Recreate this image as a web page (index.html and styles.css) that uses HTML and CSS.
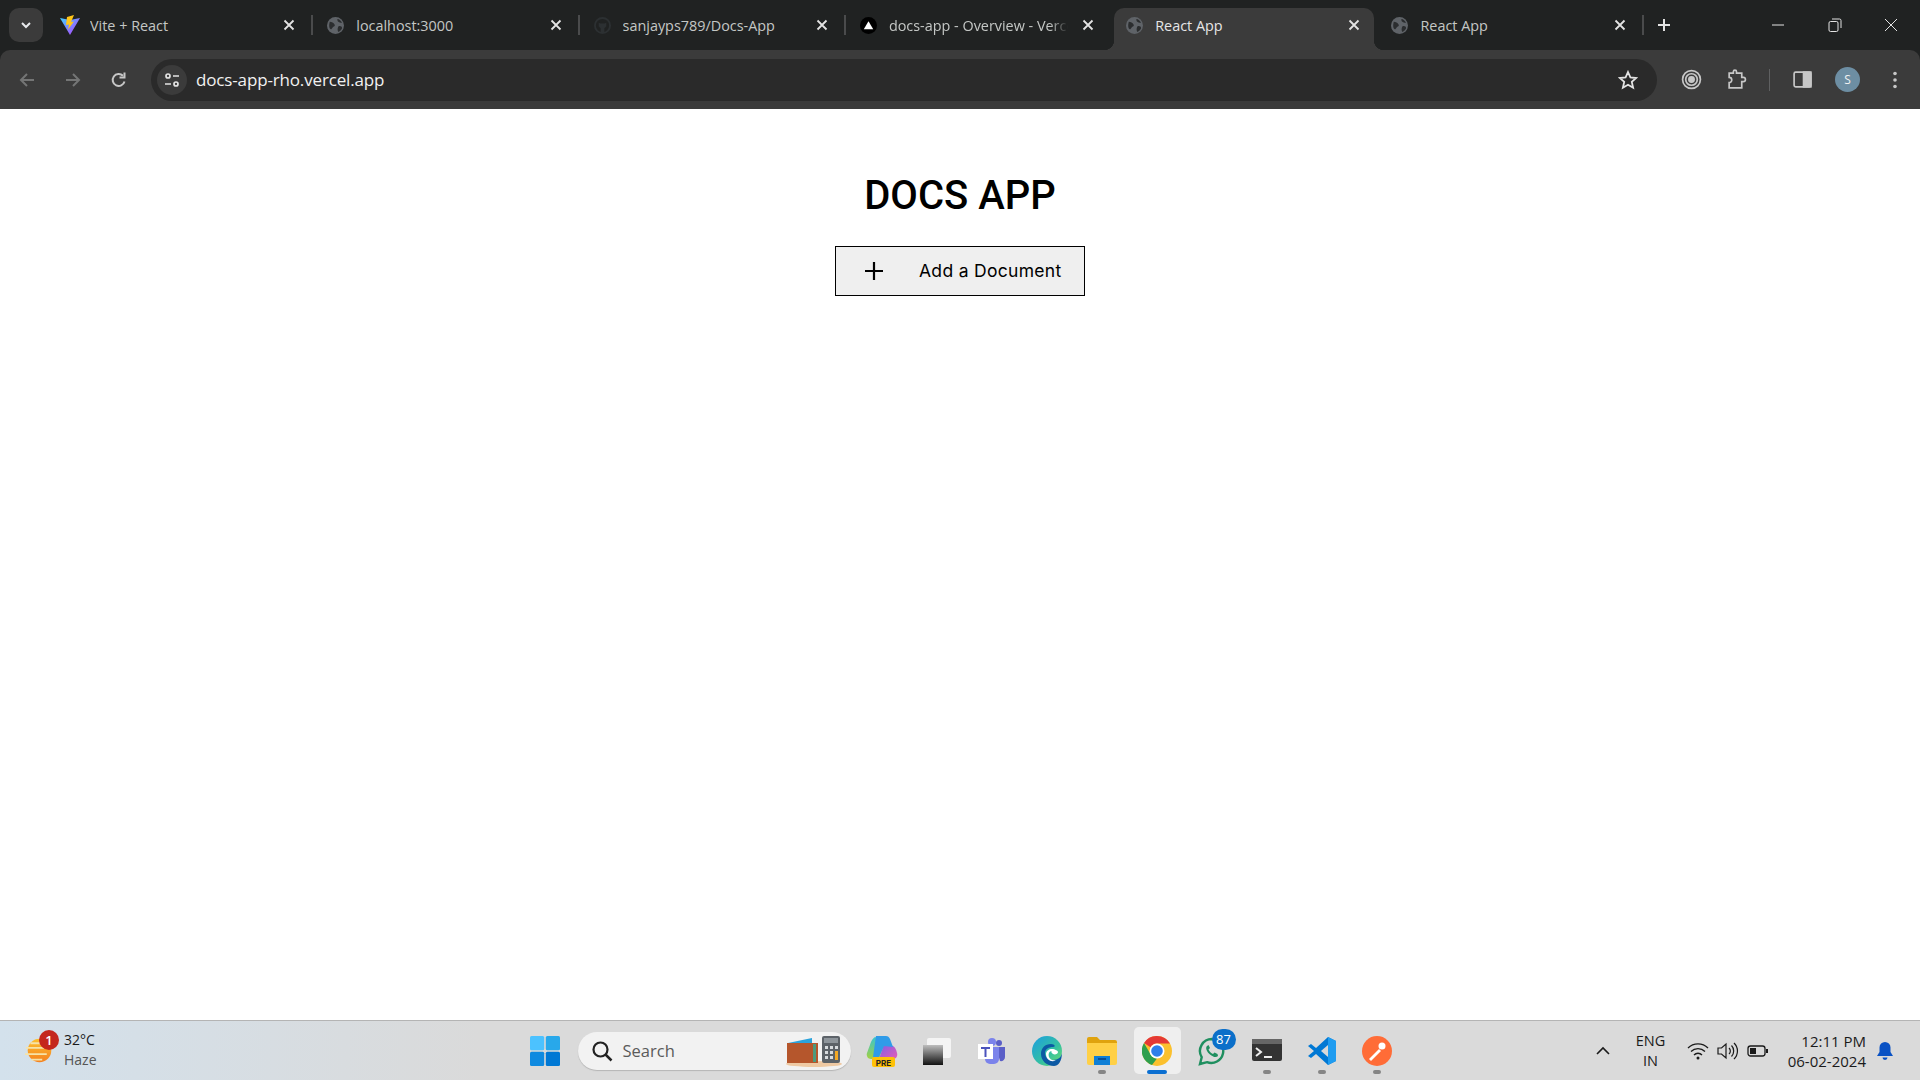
FILE: index.html
```html
<!DOCTYPE html>
<html lang="en">
<head>
    <meta charset="UTF-8">
    <meta name="viewport" content="width=device-width, initial-scale=1.0">
    <title>React App</title>
    <link rel="stylesheet" href="styles.css">
</head>
<body>
    <div class="chrome">
    <div class="tabstrip">
        <button class="tab-search"><svg width="14" height="14" viewBox="0 0 14 14"><path d="M3 5l4 4 4-4" fill="none" stroke="#e8eaed" stroke-width="2"/></svg></button>
        <div class="tab">
            <svg class="favicon favicon-vite" viewBox="0 0 20 20"><path d="M0 3l10 2 10-2-10 17z" fill="url(#vite)"/><path d="M14 0L7 2 6 10l3-.5-1 5 6-8-3 .5z" fill="#ffc517"/><defs><linearGradient id="vite" x1="0" y1="0" x2="1" y2="1"><stop offset="0" stop-color="#41d1ff"/><stop offset="1" stop-color="#bd34fe"/></linearGradient></defs></svg>
            <span class="tab-title">Vite + React</span>
            <svg class="tab-close" viewBox="0 0 16 16"><path d="M3.5 3.5l9 9m0-9l-9 9"/></svg>
        </div>
        <span class="tab-sep"></span>
        <div class="tab">
            <svg class="favicon" viewBox="0 0 18 18"><use href="#globe"/></svg>
            <span class="tab-title">localhost:3000</span>
            <svg class="tab-close" viewBox="0 0 16 16"><path d="M3.5 3.5l9 9m0-9l-9 9"/></svg>
        </div>
        <span class="tab-sep"></span>
        <div class="tab">
            <svg class="favicon" viewBox="0 0 18 18"><circle cx="9" cy="9" r="8" fill="none" stroke="#2c3032" stroke-width="2"/><path d="M5 6l2 1h4l2-1v4l-2 2v4H7v-4L5 10z" fill="#2c3032"/></svg>
            <span class="tab-title">sanjayps789/Docs-App</span>
            <svg class="tab-close" viewBox="0 0 16 16"><path d="M3.5 3.5l9 9m0-9l-9 9"/></svg>
        </div>
        <span class="tab-sep"></span>
        <div class="tab">
            <svg class="favicon" viewBox="0 0 18 18"><circle cx="9" cy="9" r="9" fill="#000"/><path d="M9 4.5l5 8.500H4z" fill="#fff"/></svg>
            <span class="tab-title tab-fade">docs-app - Overview - Vercel</span>
            <svg class="tab-close" viewBox="0 0 16 16"><path d="M3.5 3.5l9 9m0-9l-9 9"/></svg>
        </div>
        <span class="tab-sep tab-sep-off"></span>
        <div class="tab tab-active">
            <svg class="favicon" viewBox="0 0 18 18"><use href="#globe"/></svg>
            <span class="tab-title">React App</span>
            <svg class="tab-close" viewBox="0 0 16 16"><path d="M3.5 3.5l9 9m0-9l-9 9"/></svg>
        </div>
        <span class="tab-sep tab-sep-off tab-sep-tight"></span>
        <div class="tab">
            <svg class="favicon" viewBox="0 0 18 18"><use href="#globe"/></svg>
            <span class="tab-title">React App</span>
            <svg class="tab-close" viewBox="0 0 16 16"><path d="M3.5 3.5l9 9m0-9l-9 9"/></svg>
        </div>
        <span class="tab-sep"></span>
        <svg class="new-tab" viewBox="0 0 16 16"><path d="M8 2v12M2 8h12"/></svg>
        <div class="window-controls">
            <svg viewBox="0 0 14 14"><path d="M1 7h12"/></svg>
            <svg viewBox="0 0 14 14"><rect x="1" y="3.500" width="9" height="10" rx="1.500"/><path d="M4 1h7.500a1.500 1.500 0 0 1 1.500 1.500V10"/></svg>
            <svg viewBox="0 0 14 14"><path d="M1 1l12 12m0-12L1 13"/></svg>
        </div>
    </div>

    <div class="toolbar">
        <svg class="nav-icon nav-off" viewBox="0 0 18 18"><path d="M16 9H3m6-6L3 9l6 6"/></svg>
        <svg class="nav-icon nav-off" viewBox="0 0 18 18"><path d="M2 9h13M9 3l6 6-6 6"/></svg>
        <svg class="nav-icon" viewBox="0 0 18 18"><path d="M14.500 10.500A6 6 0 1 1 13 4.800"/><path d="M14.500 1.500v5h-5" /></svg>
        <div class="omnibox">
            <span class="site-info"><svg width="18" height="18" viewBox="0 0 18 18"><circle cx="5" cy="5" r="2"/><path d="M10 5h6M2 13h6"/><circle cx="13" cy="13" r="2"/></svg></span>
            <span class="url">docs-app-rho.vercel.app</span>
            <svg class="star" viewBox="0 0 20 20"><path d="M10 2l2.400 5.400 5.800.6-4.400 3.900 1.300 5.800-5.100-3-5.100 3 1.300-5.800L1.800 8l5.800-.6z"/></svg>
        </div>
        <div class="toolbar-actions">
            <svg class="tool-icon" viewBox="0 0 20 20"><circle cx="10" cy="10" r="8.500"/><circle cx="10" cy="10" r="5.500"/><circle cx="10" cy="10" r="2.500" fill="#c7c7c7"/></svg>
            <svg class="tool-icon" viewBox="0 0 20 20"><path d="M3 4h4V2.500a1.500 1.500 0 0 1 3 0V4h5v4h1.500a1.800 1.800 0 0 1 0 4H15v6H3v-5a2 2 0 0 0 0-5z"/></svg>
            <span class="tool-sep"></span>
            <svg class="tool-icon" viewBox="0 0 20 20"><rect x="2" y="3" width="16" height="14" rx="1.500"/><rect x="11" y="3" width="7" height="14" fill="#c7c7c7"/></svg>
            <span class="avatar">S</span>
            <svg class="tool-dots" viewBox="0 0 4 18"><circle cx="2" cy="2.500" r="1.800"/><circle cx="2" cy="9" r="1.800"/><circle cx="2" cy="15.500" r="1.800"/></svg>
        </div>
    </div>
    </div>

    <main class="page">
        <h1>DOCS APP</h1>
        <button class="add-doc">
            <svg width="20" height="20" viewBox="0 0 20 20"><path d="M10 1v18M1 10h18" stroke="#000" stroke-width="2.200"/></svg>
            <span class="add-doc-label">Add a Document</span>
        </button>
    </main>

    <footer class="taskbar">
        <div class="weather">
            <svg class="weather-icon" viewBox="0 0 32 32"><circle cx="16" cy="16" r="13" fill="url(#sun)"/><path d="M1 13h20M0 20h24M6 8h14M7 26h12" stroke="#f6e3a8" stroke-width="2"/><defs><linearGradient id="sun" x1="0" y1="0" x2="0" y2="1"><stop offset="0" stop-color="#fdc02f"/><stop offset="1" stop-color="#f4811f"/></linearGradient></defs></svg>
            <span class="weather-badge">1</span>
            <div class="weather-text">
                <span>32°C</span>
                <span class="haze">Haze</span>
            </div>
        </div>

        <div class="task-icons">
            <span class="task-item"><svg width="30" height="30" viewBox="0 0 30 30"><rect width="14.200" height="14.200" rx="1.500" fill="#4cc2ff"/><rect x="15.800" width="14.200" height="14.200" rx="1.500" fill="#28a8ea"/><rect y="15.800" width="14.200" height="14.200" rx="1.500" fill="#0f8ae0"/><rect x="15.800" y="15.800" width="14.200" height="14.200" rx="1.500" fill="#0078d4"/></svg></span>
            <div class="search-box">
                <svg width="22" height="22" viewBox="0 0 22 22"><circle cx="9.500" cy="9.500" r="7" fill="none" stroke="#222" stroke-width="2.200"/><path d="M14.500 14.500l6 6" stroke="#222" stroke-width="2.500"/></svg>
                <span class="search-label">Search</span>
                <svg class="search-art" width="58" height="32" viewBox="0 0 58 32"><ellipse cx="29" cy="29" rx="28" ry="3" fill="#eec9a3"/><rect x="2" y="8" width="31" height="20" fill="#b5562c"/><path d="M3 8l24-5v5z" fill="#2aa3dc"/><rect x="28" y="9" width="3" height="18" fill="#4d9a7d"/><rect x="37" y="1" width="18" height="27" rx="2" fill="#5c6268"/><rect x="39" y="3" width="14" height="5" fill="#8e959b"/><path d="M40 11h3v3h-3zm5 0h3v3h-3zm5 0h3v3h-3zM40 16h3v3h-3zm5 0h3v3h-3zM40 21h3v3h-3zm5 0h3v3h-3z" fill="#d7dbde"/><rect x="50" y="16" width="3" height="9" fill="#f3a824"/></svg>
            </div>
            <span class="task-item"><svg width="34" height="34" viewBox="0 0 34 34"><path d="M10 3c-2 1-3 3-4 5L2 19c-1 3 1 6 4 6h8L20 8z" fill="url(#copilot-left)"/><path d="M19 10l9 2c2 1 3 3 4 7 1 3-1 6-4 6H14z" fill="url(#copilot-right)"/><path d="M11 2h10c2 0 3 1 4 3l3 8-9-1-5 11H8z" fill="#2f9be8"/><defs><linearGradient id="copilot-left" x1="0" y1="0" x2="0" y2="1"><stop offset="0" stop-color="#37c6d0"/><stop offset="1" stop-color="#a5d13f"/></linearGradient><linearGradient id="copilot-right" x1="0" y1="0" x2="1" y2="1"><stop offset="0" stop-color="#7a5fe8"/><stop offset="1" stop-color="#e65bb8"/></linearGradient></defs><rect x="7" y="23" width="23" height="10" rx="2" fill="#ffc107"/><text x="18.500" y="31.500" text-anchor="middle" class="pre-tag">PRE</text></svg></span>
            <span class="task-item"><svg width="30" height="30" viewBox="0 0 30 30"><rect x="5" y="2" width="24" height="20" rx="2" fill="#f4f4f4"/><rect x="1" y="9" width="20" height="20" fill="url(#stack)"/><defs><linearGradient id="stack" x1="0" y1="0" x2="0" y2="1"><stop offset="0" stop-color="#bdbdbd"/><stop offset=".6" stop-color="#555"/><stop offset="1" stop-color="#111"/></linearGradient></defs></svg></span>
            <span class="task-item"><svg width="30" height="30" viewBox="0 0 30 30"><circle cx="22" cy="7" r="3" fill="#5b5fc7"/><circle cx="15" cy="6" r="4" fill="#7b83eb"/><path d="M19 11h9v10a4 4 0 0 1-5 4z" fill="#5b5fc7"/><path d="M8 11h14v12a5 5 0 0 1-5 5h-4a5 5 0 0 1-5-5z" fill="#7b83eb"/><rect x="1" y="8" width="15" height="15" fill="#fff"/><path d="M4 11h9v2h-3.500v8h-2v-8H4z" fill="#4b53bc"/></svg></span>
            <span class="task-item"><svg width="32" height="32" viewBox="0 0 32 32"><circle cx="16" cy="16" r="15" fill="url(#edge)"/><path d="M31 17c0 5-4 8-9 8-6 0-8-4-8-7 0-4 4-6 8-6 3 0 2-3-2-3-6 0-10 4-10 10 0 7 6 12 13 12 4 0 8-4 8-14z" fill="#0c59a4"/><path d="M15 19c0-3 3-5 6-5s6 2 6 3c0 2-3 3-5 2s-2-3-1-3c-3 0-4 3-3 6 1 2 3 4 7 3-4 3-10 0-10-6z" fill="#fff"/><defs><linearGradient id="edge" x1="0" y1="0" x2="1" y2="1"><stop offset="0" stop-color="#1b9de2"/><stop offset=".6" stop-color="#35c1a0"/><stop offset="1" stop-color="#74e06c"/></linearGradient></defs></svg></span>
            <span class="task-item task-running"><svg width="30" height="28" viewBox="0 0 30 28"><path d="M0 2a2 2 0 0 1 2-2h8l3 3h15a2 2 0 0 1 2 2v4H0z" fill="#e0a30e"/><path d="M0 6h30v20a2 2 0 0 1-2 2H2a2 2 0 0 1-2-2z" fill="#ffd046"/><path d="M7 19h16v9H7z" fill="#0f7fd6"/><rect x="11" y="21" width="8" height="2" fill="#0a4f96"/></svg></span>
            <span class="task-item task-active"><svg width="30" height="30" viewBox="0 0 30 30"><circle cx="15" cy="15" r="15" fill="#fbc02d"/><path d="M15 0a15 15 0 0 1 13 7.500H15a7.500 7.500 0 0 0-6.500 3.800L2 7a15 15 0 0 1 13-7z" fill="#e53935"/><path d="M2 7l6.500 11.300A7.500 7.500 0 0 0 15 22.500l-5 6.500A15 15 0 0 1 2 7z" fill="#2e9f4e"/><circle cx="15" cy="15" r="7.500" fill="#fff"/><circle cx="15" cy="15" r="5.800" fill="#2f7fea"/></svg></span>
            <span class="task-item"><svg width="30" height="30" viewBox="0 0 30 30"><path d="M15 3a12 12 0 0 0-10.300 18.200L3 28l7-1.800A12 12 0 1 0 15 3z" fill="none" stroke="#1f8f5f" stroke-width="2.400"/><path d="M10 10c-2 2 0 6 3 8.500s6 3.500 8 1.500l-.5-2-3-1.500-1.500 1.500c-2-1-3.500-2.500-4.500-4.500l1.500-1.500L11.500 9z" fill="#1f8f5f"/></svg><span class="task-badge">87</span></span>
            <span class="task-item task-running"><svg width="30" height="24" viewBox="0 0 30 24"><rect width="30" height="22" rx="2" fill="#333"/><rect width="30" height="5" fill="#666"/><path d="M4 9l5 4-5 4" fill="none" stroke="#eee" stroke-width="2"/><path d="M12 18h8" stroke="#eee" stroke-width="2"/></svg></span>
            <span class="task-item task-running"><svg width="30" height="30" viewBox="0 0 30 30"><path d="M21 1l8 4v20l-8 4L9 18l-5 4-3-2 6-5-6-5 3-2 5 4z" fill="#0078d4"/><path d="M21 1l8 4v20l-8 4z" fill="#1f9cf0"/><path d="M21 9l-7 6 7 6z" fill="#d9d9d9"/></svg></span>
            <span class="task-item task-running"><svg width="30" height="30" viewBox="0 0 30 30"><circle cx="15" cy="15" r="15" fill="#ff6c37"/><path d="M7 23l10-10 2 2-10 10z" fill="#fff"/><circle cx="20" cy="10" r="3.500" fill="#fff"/></svg></span>
        </div>

        <div class="tray">
            <svg class="tray-chevron" width="16" height="16" viewBox="0 0 16 16"><path d="M2 11l6-6 6 6"/></svg>
            <div class="tray-lang"><span>ENG</span><span>IN</span></div>
            <div class="tray-status">
                <svg width="22" height="20" viewBox="0 0 22 20"><path d="M1 7a14 14 0 0 1 20 0M4 10.500a10 10 0 0 1 14 0M7 14a5.500 5.500 0 0 1 8 0" fill="none" stroke="#1a1a1a" stroke-width="1.300"/><circle cx="11" cy="17" r="1.500" fill="#1a1a1a"/></svg>
                <svg width="22" height="20" viewBox="0 0 22 20"><path d="M1 7v6h3.500L9 17V3L4.500 7zM12 7a4 4 0 0 1 0 6M14.500 4.500a8 8 0 0 1 0 11M17 2a11 11 0 0 1 0 16" fill="none" stroke="#1a1a1a" stroke-width="1.200"/></svg>
                <svg width="22" height="20" viewBox="0 0 22 20"><rect x="1" y="5" width="17" height="10" rx="2.500" fill="none" stroke="#1a1a1a" stroke-width="1.300"/><rect x="3" y="7" width="6" height="6" fill="#1a1a1a"/><path d="M19 8h2v4h-2z" fill="#1a1a1a"/></svg>
            </div>
            <div class="tray-clock"><span>12:11 PM</span><span>06-02-2024</span></div>
            <svg class="tray-bell" width="18" height="20" viewBox="0 0 18 20"><path d="M9 1a5.500 5.500 0 0 1 5.500 5.500V11l2.500 4H1l2.500-4V6.500A5.500 5.500 0 0 1 9 1z" fill="#0a52c4"/><path d="M6.500 16.500h5a2.500 2.500 0 0 1-5 0z" fill="#0a52c4"/></svg>
        </div>
    </footer>

    <svg class="icon-defs" width="0" height="0"><defs><g id="globe"><circle cx="9" cy="9" r="9" fill="#5f6368"/><path d="M3 5c2 0 4 1 5 3s-1 2-2 3-1 2-2 2C2 12 2 8 3 5zM11 2c2 0 4 2 5 4-2 0-3 0-4-1s-1-2-1-3zM12 10c2-1 4 0 4 2-1 2-2 3-4 4-1-2-1-4 0-6z" fill="#2b2d2f"/></g></defs></svg>
</body>
</html>
```

FILE: styles.css
```css
/* Page frame */
html, body {
    height: 100%;
}
body {
    margin: 0;
    display: flex;
    flex-direction: column;
    height: 1080px;
    overflow: hidden;
    background: #fff;
    font-family: 'Open Sans', sans-serif;
}
.icon-defs {
    position: absolute;
}
.chrome {
    background: #202222;
}

/* Tab strip */
.tabstrip {
    display: flex;
    align-items: flex-end;
    height: 50px;
    padding-left: 9px;
    box-sizing: border-box;
}
.tab-search {
    align-self: flex-start;
    display: flex;
    align-items: center;
    justify-content: center;
    width: 34px;
    height: 34px;
    margin-top: 8px;
    margin-right: 6px;
    padding: 0;
    border: none;
    border-radius: 10px;
    background: #3b3b3b;
}
.tab {
    position: relative;
    display: flex;
    align-items: center;
    gap: 12px;
    width: 260.3px;
    height: 42px;
    padding: 0 12px 8px 12px;
    box-sizing: border-box;
    flex-shrink: 0;
    color: #c4c7c5;
}
.tab-active {
    background: #3b3b3b;
    border-radius: 10px 10px 0 0;
    color: #e6e6e6;
}
.tab-active::before,
.tab-active::after {
    content: "";
    position: absolute;
    bottom: 0;
    width: 10px;
    height: 10px;
}
.tab-active::before {
    left: -10px;
    background: radial-gradient(circle at 0 0, transparent 10px, #3b3b3b 10.500px);
}
.tab-active::after {
    right: -10px;
    background: radial-gradient(circle at 100% 0, transparent 10px, #3b3b3b 10.500px);
}
.favicon {
    width: 17px;
    height: 17px;
    flex-shrink: 0;
}
.favicon-vite {
    width: 20px;
    height: 20px;
    margin: 0 -1.500px;
}
.tab-title {
    flex: 1;
    overflow: hidden;
    white-space: nowrap;
    font-size: 14.400px;
}
.tab-fade {
    -webkit-mask-image: linear-gradient(to right, #000 90%, transparent 100%);
    mask-image: linear-gradient(to right, #000 90%, transparent 100%);
}
.tab-close {
    width: 16px;
    height: 16px;
    flex-shrink: 0;
    fill: none;
    stroke: #e3e3e3;
    stroke-width: 1.800;
}
.tab-sep {
    width: 2px;
    height: 20px;
    margin: 0 2px 15px;
    background: #4a4b4c;
    flex-shrink: 0;
}
.tab-sep-off {
    background: transparent;
}
.tab-sep-tight {
    margin: 0 3px 15px 0;
}
.new-tab {
    width: 16px;
    height: 16px;
    margin: 0 0 17px 10px;
    fill: none;
    stroke: #e3e3e3;
    stroke-width: 2;
}
.window-controls {
    display: flex;
    gap: 42.500px;
    margin-left: auto;
    margin-right: 22px;
    margin-bottom: 18px;
}
.window-controls svg {
    width: 14px;
    height: 14px;
    fill: none;
    stroke: #e3e3e3;
    stroke-width: 1;
}

/* Toolbar */
.toolbar {
    display: flex;
    align-items: center;
    height: 59px;
    padding: 0 23.500px 0 18px;
    background: #3b3b3b;
    box-sizing: border-box;
    border-radius: 10px 10px 0 0;
}
.nav-icon {
    width: 18px;
    height: 18px;
    margin-right: 28px;
    fill: none;
    stroke: #c7c7c7;
    stroke-width: 2;
    flex-shrink: 0;
}
.nav-off {
    stroke: #747575;
}
.omnibox {
    display: flex;
    align-items: center;
    width: 1506px;
    height: 42px;
    margin-left: -5px;
    padding: 0 19px 0 6px;
    box-sizing: border-box;
    border-radius: 21px;
    background: #2a2a2a;
    flex-shrink: 0;
}
.site-info {
    display: flex;
    align-items: center;
    justify-content: center;
    width: 30px;
    height: 30px;
    border-radius: 50%;
    background: #3b3b3b;
}
.site-info svg {
    fill: none;
    stroke: #e3e3e3;
    stroke-width: 1.700;
}
.url {
    flex: 1;
    margin-left: 9px;
    font-size: 17px;
    letter-spacing: -0.15px;
    color: #f1f1f1;
}
.star {
    width: 20px;
    height: 20px;
    fill: none;
    stroke: #e3e3e3;
    stroke-width: 1.800;
}
.toolbar-actions {
    display: flex;
    align-items: center;
    margin-left: 23.500px;
    flex: 1;
}
.tool-icon {
    width: 21px;
    height: 21px;
    margin-right: 24px;
    fill: none;
    stroke: #c7c7c7;
    stroke-width: 1.600;
    flex-shrink: 0;
}
.tool-sep {
    width: 1px;
    height: 22px;
    margin-left: -1.500px;
    margin-right: 22px;
    background: #5f6061;
}
.avatar {
    display: flex;
    align-items: center;
    justify-content: center;
    width: 25px;
    height: 25px;
    margin-left: -2px;
    border-radius: 50%;
    background: #6d8ea3;
    color: #f1f1f1;
    font-size: 12px;
}
.tool-dots {
    width: 4px;
    height: 18px;
    margin-left: auto;
    fill: #c7c7c7;
}

/* Page content */
.page {
    flex: 1;
    display: flex;
    flex-direction: column;
    align-items: center;
    padding-top: 62px;
}
h1 {
    margin: 0 0 25px;
    font-family: 'Roboto', sans-serif;
    font-size: 40px;
    line-height: 50px;
    font-weight: 500;
    color: #000;
}
.add-doc {
    display: flex;
    align-items: center;
    gap: 35px;
    width: 250px;
    height: 50px;
    padding: 0 0 0 28px;
    box-sizing: border-box;
    border: 1.500px solid #000;
    background: #efefef;
    font-family: 'Inter', sans-serif;
    font-size: 17.500px;
    letter-spacing: 0.3px;
    color: #000;
}
.add-doc-label {
    margin-top: -2px;
}

/* Taskbar */
.taskbar {
    display: flex;
    align-items: center;
    height: 60px;
    box-sizing: border-box;
    border-top: 1px solid #b4b4b4;
    background: linear-gradient(to right, #d3e1ec, #dadada 25%, #dadada);
}
.weather {
    position: relative;
    display: flex;
    align-items: center;
    gap: 10px;
    width: 545px;
    padding-left: 25px;
    box-sizing: border-box;
    flex-shrink: 0;
}
.weather-icon {
    width: 29px;
    height: 29px;
}
.weather-badge {
    position: absolute;
    left: 39px;
    top: -2px;
    width: 20px;
    height: 20px;
    border-radius: 50%;
    background: #c4261d;
    color: #fff;
    font-size: 13px;
    line-height: 20px;
    text-align: center;
    font-weight: 600;
}
.weather-text {
    display: flex;
    flex-direction: column;
    margin-top: -2px;
    font-size: 14px;
    line-height: 20px;
    color: #1a1a1a;
}
.haze {
    color: #555;
}
.task-icons {
    display: flex;
    align-items: center;
    margin-left: -28px;
}
.task-item {
    position: relative;
    display: flex;
    align-items: center;
    justify-content: center;
    width: 47px;
    height: 47px;
    margin: 0 4px;
    border-radius: 5px;
    flex-shrink: 0;
}
.task-active {
    background: #efefef;
}
.task-active::after,
.task-running::after {
    content: "";
    position: absolute;
    bottom: 0;
    left: 50%;
    width: 8px;
    height: 4px;
    margin-left: -4px;
    border-radius: 2px;
    background: #858585;
}
.task-active::after {
    width: 20px;
    margin-left: -10px;
    background: #0b6fd1;
}
.task-badge {
    position: absolute;
    top: 2px;
    right: 0;
    min-width: 24px;
    height: 21px;
    border-radius: 11px;
    background: #0b6fc9;
    color: #fff;
    font-size: 13px;
    line-height: 21px;
    text-align: center;
}
.pre-tag {
    font-family: 'Inter', sans-serif;
    font-size: 8px;
    font-weight: 700;
    fill: #222;
}
.search-box {
    display: flex;
    align-items: center;
    width: 273px;
    height: 38px;
    margin: 0 4px 0 5.500px;
    padding: 0 8px 0 13px;
    box-sizing: border-box;
    border-radius: 19px;
    background: #f2f2f2;
    box-shadow: 0 1px 1px #b5b5b5;
    flex-shrink: 0;
}
.search-label {
    margin-left: 10px;
    font-size: 16.500px;
    color: #5b5b5b;
}
.search-art {
    margin-left: auto;
}
.tray {
    display: flex;
    align-items: center;
    margin-left: auto;
    padding-right: 26px;
    color: #1a1a1a;
}
.tray-chevron {
    margin-right: 24.500px;
    fill: none;
    stroke: #1a1a1a;
    stroke-width: 1.600;
}
.tray-lang {
    display: flex;
    flex-direction: column;
    align-items: center;
    margin-right: 22px;
    font-size: 14.500px;
    line-height: 20px;
}
.tray-status {
    display: flex;
    align-items: center;
    gap: 8px;
    margin-right: 18.500px;
}
.tray-clock {
    display: flex;
    flex-direction: column;
    align-items: flex-end;
    margin-right: 10px;
    font-size: 15px;
    line-height: 20px;
}
```
